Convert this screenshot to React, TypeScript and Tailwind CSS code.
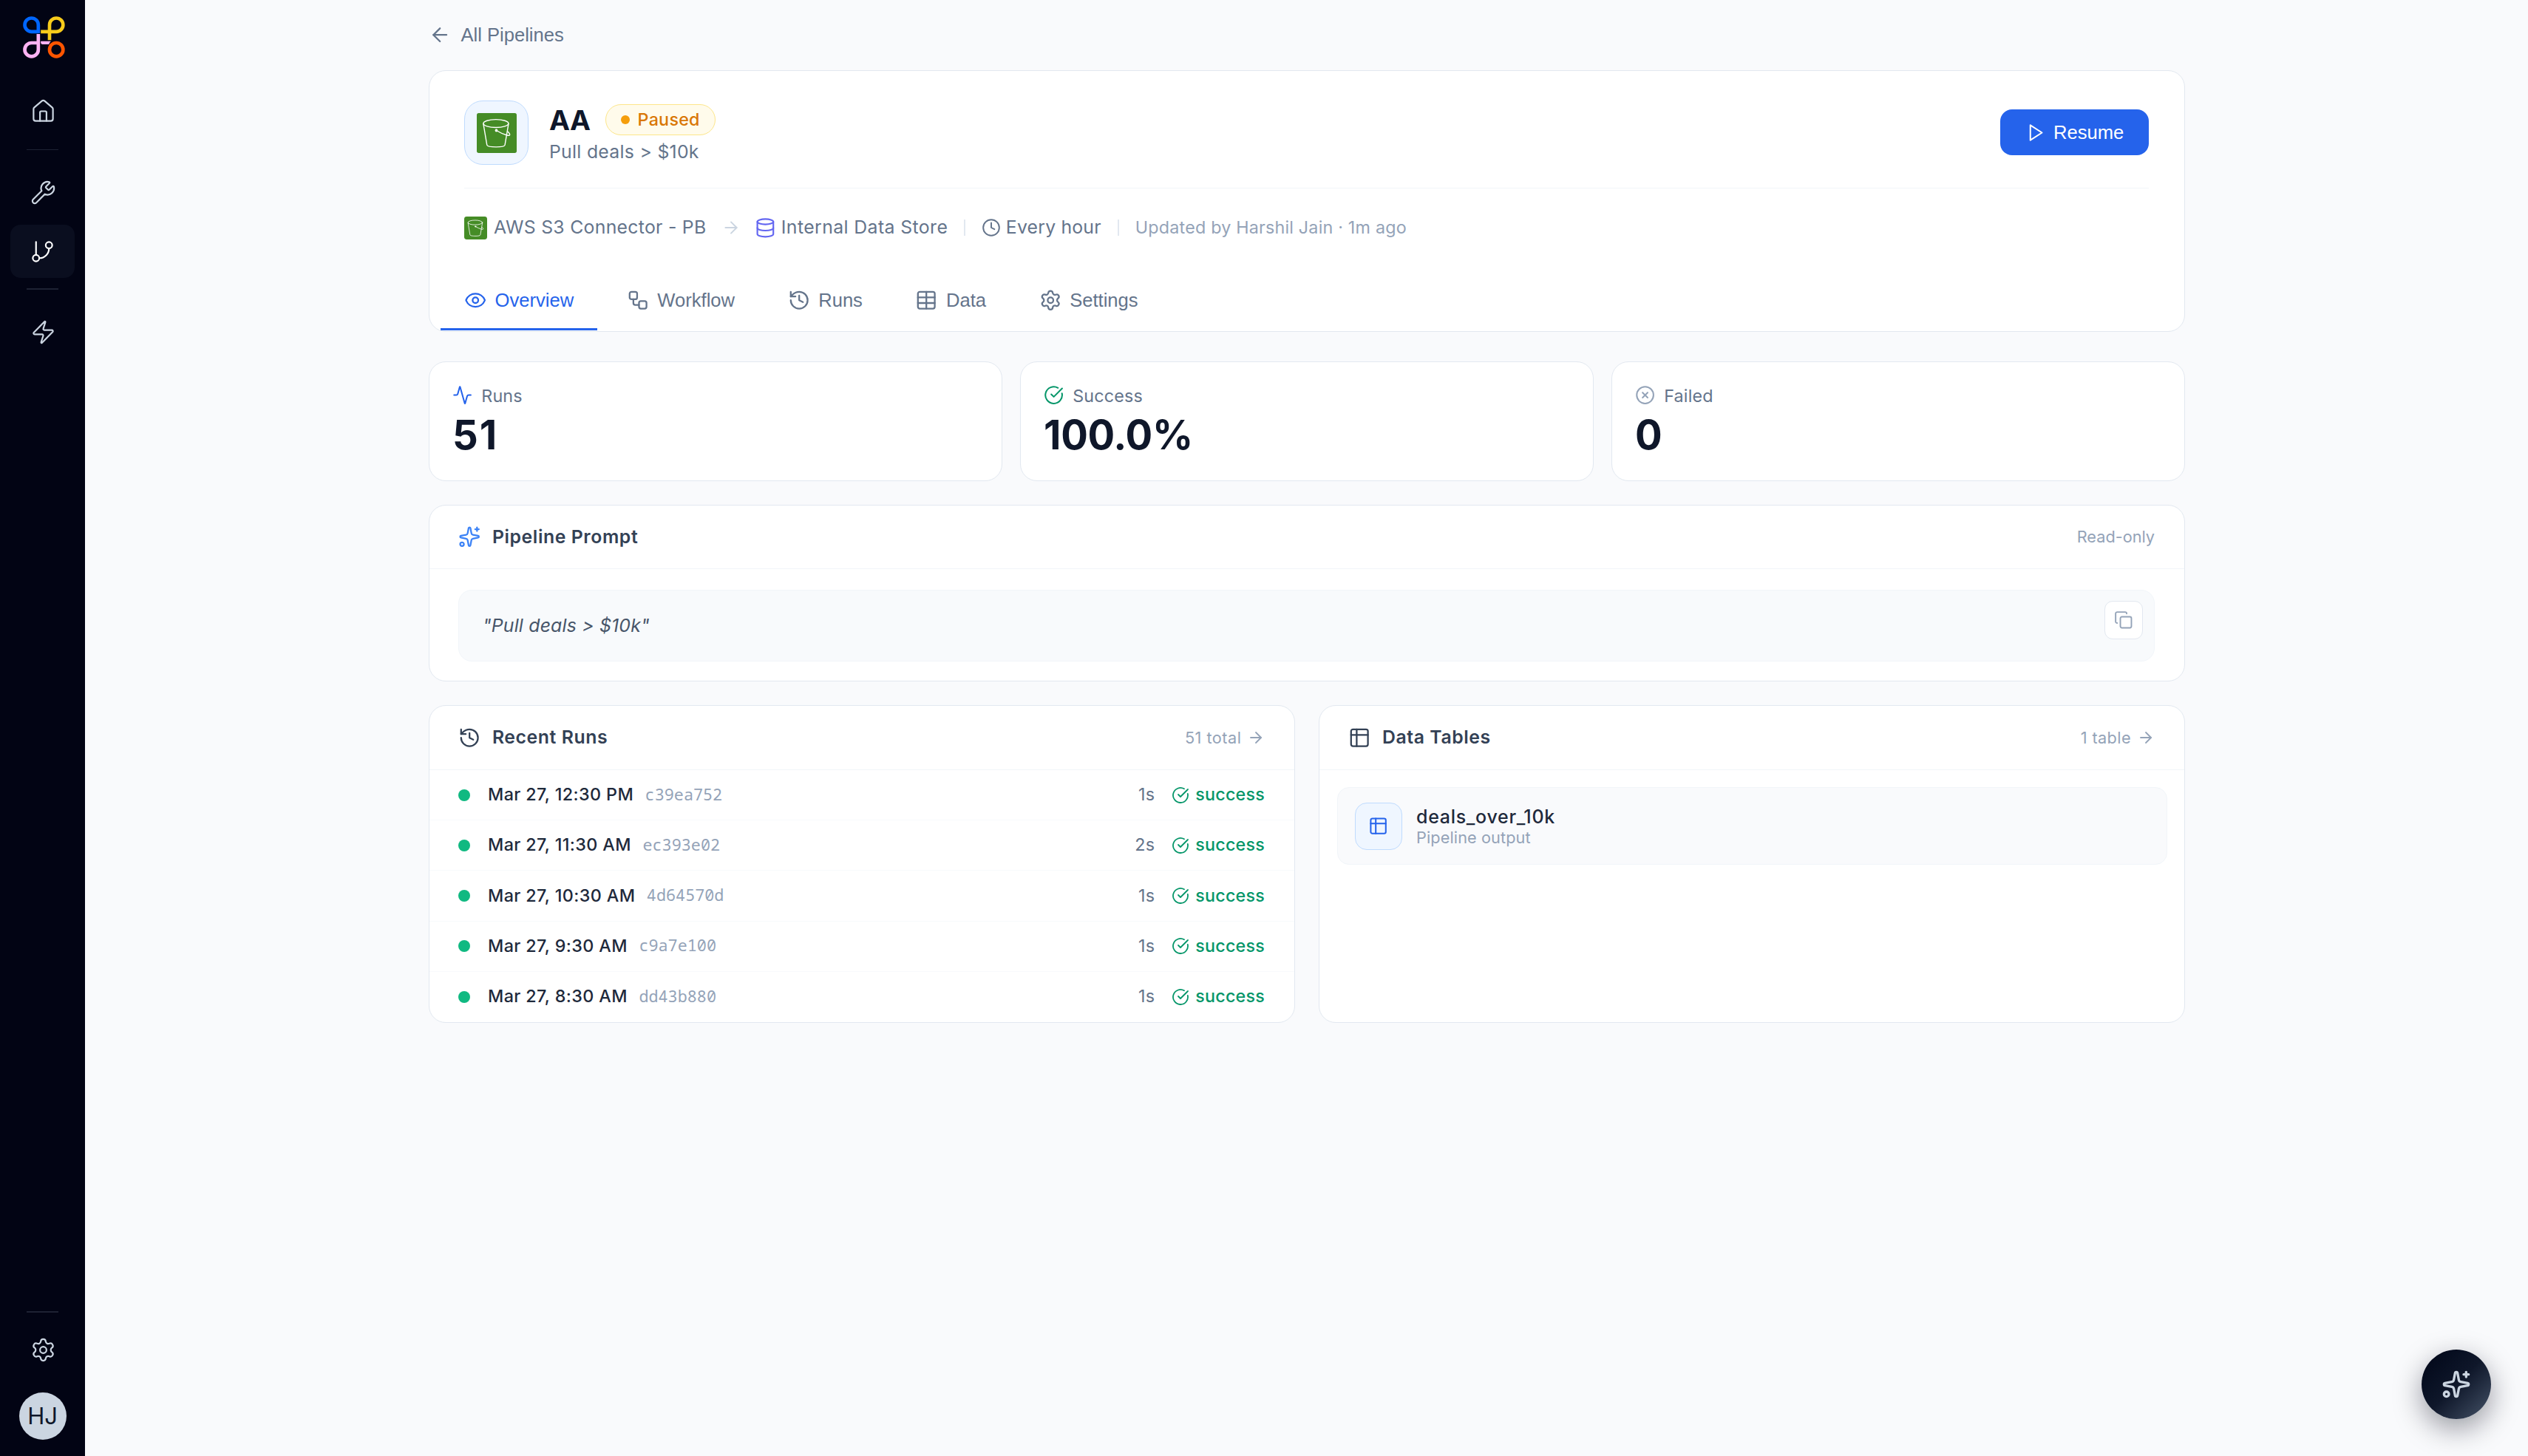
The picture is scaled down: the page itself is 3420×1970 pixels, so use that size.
import type { ReactNode } from 'react';
import {
  Activity,
  ArrowLeft,
  ArrowRight,
  CircleCheckBig,
  CircleX,
  Clock,
  Copy,
  Database,
  Eye,
  GitBranch,
  History,
  House,
  Settings,
  Sparkles,
  Table,
  Workflow,
  Wrench,
  Zap,
} from 'lucide-react';

function TableIcon({ size, strokeWidth = 2 }: { size: number; strokeWidth?: number }) {
  return (
    <svg width={size} height={size} viewBox="0 0 24 24" fill="none" stroke="currentColor" strokeWidth={strokeWidth} strokeLinecap="round" strokeLinejoin="round" className="shrink-0">
      <rect x="3" y="3" width="18" height="18" rx="2" />
      <path d="M3 9h18M9 3v18" />
    </svg>
  );
}

function Logo() {
  return (
    <svg width="57" height="57" viewBox="32.5 36 171 171" fill="none" strokeWidth="14">
      <path d="M95 105V71A27.5 27.5 0 1 0 67.5 98.5H95" stroke="#0066ff" />
      <path d="M140.500 133V71a27.500 27.500 0 1 1 27.500 27.500H105" stroke="#f8cc1b" />
      <path d="M95 108v63.500A27.500 27.500 0 1 1 67.500 144H88" stroke="#ffb3f3" />
      <path d="M105 137h41q-6 6-8 13h-28q-3-1-5-5z" fill="#ffb3f3" />
      <circle cx="168" cy="171.500" r="27.500" stroke="#ff5500" />
    </svg>
  );
}

function Bucket({ size }: { size: number }) {
  return (
    <svg width={size} height={size} viewBox="0 0 100 100" fill="none" stroke="#fff" strokeWidth="2.600" strokeLinecap="round" strokeLinejoin="round" className="shrink-0">
      <rect width="100" height="100" rx={size > 40 ? 5 : 11} fill="#458c26" stroke="none" />
      <ellipse cx="48" cy="26" rx="31.500" ry="10" />
      <path d="M16.500 27l9 53c1 4 12 5 23 5s21-1 22-5l9-53" />
      <circle cx="49" cy="43.500" r="2.200" fill="#fff" />
      <path d="M49 43.500c8 5 17 9 27 12 6 2 8-1 6-4l-4-5" />
    </svg>
  );
}

function RailIcon({ children }: { children: ReactNode }) {
  return <div className="flex h-[72px] w-[87px] items-center justify-center rounded-[14px] text-[#cbd5e1]">{children}</div>;
}

function Sidebar() {
  return (
    <aside className="flex w-[115px] shrink-0 flex-col items-center bg-[#020414]">
      <div className="mt-[22px] ml-[4px]">
        <Logo />
      </div>
      <div className="mt-[35px] ml-px">
        <RailIcon><House size={35} strokeWidth={1.5} /></RailIcon>
      </div>
      <div className="mt-[16px] h-px w-[43px] bg-[#1e2233]" />
      <div className="mt-[21px] ml-px">
        <RailIcon><Wrench size={35} strokeWidth={1.5} /></RailIcon>
      </div>
      <div className="mt-[8px] flex h-[72px] w-[87px] items-center justify-center rounded-[14px] bg-[#0a0e1f] text-white">
        <GitBranch size={35} strokeWidth={1.5} />
      </div>
      <div className="mt-[14px] h-[2px] w-[43px] bg-[#1e2233]" />
      <div className="mt-[21px] ml-px">
        <RailIcon><Zap size={35} strokeWidth={1.5} /></RailIcon>
      </div>
      <div className="mt-auto h-[2px] w-[43px] bg-[#1e2233]" />
      <div className="mt-[14px] ml-px">
        <RailIcon><Settings size={35} strokeWidth={1.5} /></RailIcon>
      </div>
      <div className="mt-[22px] mb-[22px] flex size-[64px] items-center justify-center rounded-full bg-[#cbd5e1] text-[31px] text-[#0f172a]">HJ</div>
    </aside>
  );
}

function Card({ className, children }: { className: string; children: ReactNode }) {
  return <section className={`overflow-hidden rounded-[23px] border border-[#e2e8f0] bg-white ${className}`}>{children}</section>;
}

const TABS = [
  { label: 'Overview', Icon: Eye, active: true },
  { label: 'Workflow', Icon: Workflow, active: false },
  { label: 'Runs', Icon: History, active: false },
  { label: 'Data', Icon: Table, active: false },
  { label: 'Settings', Icon: Settings, active: false },
];

function PipelineHeader() {
  return (
    <Card className="mt-[14px] h-[354px]">
      <div className="mr-[48px] ml-[47px] flex h-[159px] justify-between border-b border-[#f1f5f9] pt-[40px]">
        <div className="flex">
          <div className="flex size-[87px] items-center justify-center rounded-[25px] border border-[#bfdbfe] bg-[#eff6ff]">
            <Bucket size={54} />
          </div>
          <div className="ml-[28px]">
            <div className="mt-[5px] flex h-[42px] items-center">
              <h1 className="pt-[2px] text-[37.5px] font-bold tracking-[-0.5px] text-[#0f172a]">AA</h1>
              <div className="ml-[20px] flex h-[42px] items-center rounded-full border border-[#fde68a] bg-[#fffbeb] pr-[20px] pl-[20px]">
                <span className="size-[12px] rounded-full bg-[#f59e0b]" />
                <span className="ml-[11px] pt-px text-[23.3px] font-medium tracking-[0.25px] text-[#d97706]">Paused</span>
              </div>
            </div>
            <p className="mt-[6px] text-[24.8px] leading-[32px] tracking-[0.28px] text-[#64748b]">Pull deals &gt; $10k</p>
          </div>
        </div>
        <button className="mt-[12px] flex h-[62px] w-[201px] items-center rounded-[16px] bg-[#2563eb] pl-[34px] font-['Liberation_Sans'] text-[25.6px] text-white">
          <svg width="27" height="27" viewBox="0 0 24 24" fill="none" stroke="currentColor" strokeWidth="1.800" strokeLinecap="round" strokeLinejoin="round">
            <path d="M6 3l14 9-14 9z" />
          </svg>
          <span className="ml-[11px]">Resume</span>
        </button>
      </div>
      <div className="mx-[47px] flex h-[105px] items-center pt-px text-[24.8px] text-[#64748b]">
        <Bucket size={31} />
        <span className="ml-[9px] w-[289px] tracking-[0.28px] whitespace-nowrap">AWS S3 Connector - PB</span>
        <ArrowRight size={26} strokeWidth={1.8} className="ml-[19px] text-[#cbd5e1]" />
        <Database size={28.8} strokeWidth={1.8} className="ml-[19px] text-[#6366f1]" />
        <span className="ml-[7px] w-[225px] tracking-[0.4px] whitespace-nowrap">Internal Data Store</span>
        <span className="ml-[22px] h-[22px] w-[2px] bg-[#e2e8f0]" />
        <Clock size={26} strokeWidth={1.8} className="ml-[22px]" />
        <span className="ml-[7px] w-[129px] tracking-[0.2px] whitespace-nowrap">Every hour</span>
        <span className="ml-[22px] h-[22px] w-[2px] bg-[#e2e8f0]" />
        <span className="ml-[22px] pt-px text-[23.3px] tracking-[0.2px] whitespace-nowrap text-[#94a3b8]">Updated by Harshil Jain · 1m ago</span>
      </div>
      <nav className="flex h-[87px] gap-[7.5px] pl-[15px] font-['Liberation_Sans'] text-[25.6px]">
        {TABS.map(({ label, Icon, active }) => (
          <div
            key={label}
            className={
              active
                ? 'flex items-center gap-[11.2px] border-b-3 border-[#2563eb] px-[32px] pt-[8px] text-[#2563eb]'
                : 'flex items-center gap-[11.2px] border-b-3 border-transparent px-[32px] pt-[8px] text-[#64748b]'
            }
          >
            <Icon size={30.4} strokeWidth={1.8} />
            <span>{label}</span>
          </div>
        ))}
      </nav>
    </Card>
  );
}

const STATS = [
  { label: 'Runs', value: '51', Icon: Activity, color: 'text-[#2563eb]', tracking: 'tracking-[2px]' },
  { label: 'Success', value: '100.0%', Icon: CircleCheckBig, color: 'text-[#059669]', tracking: 'tracking-[-0.3px]' },
  { label: 'Failed', value: '0', Icon: CircleX, color: 'text-[#94a3b8]', tracking: 'tracking-normal' },
];

function Stats() {
  return (
    <div className="mt-[40px] grid grid-cols-3 gap-[24px]">
      {STATS.map(({ label, value, Icon, color, tracking }) => (
        <Card key={label} className="h-[162px] pl-[31px]">
          <div className="mt-[29px] flex h-[32px] items-center">
            <Icon size={27.2} strokeWidth={1.8} className={color} />
            <span className="ml-[12px] pt-[2px] text-[23.3px] tracking-[0.2px] text-[#64748b]">{label}</span>
          </div>
          <div className={`mt-[4px] text-[54.4px] leading-[66px] font-bold text-[#0f172a] ${tracking}`}>{value}</div>
        </Card>
      ))}
    </div>
  );
}

function PanelHead({ icon, title, right, className }: { icon: ReactNode; title: string; right: ReactNode; className: string }) {
  return (
    <div className={`flex items-center border-b border-[#f1f5f9] pr-[40px] pl-[39px] ${className}`}>
      {icon}
      <h2 className="ml-[15.5px] text-[24.8px] font-semibold tracking-[0.58px] text-[#334155]">{title}</h2>
      <div className="ml-auto flex items-center text-[21.7px] text-[#94a3b8]">{right}</div>
    </div>
  );
}

function Prompt() {
  return (
    <Card className="mt-[32px] h-[239px]">
      <PanelHead
        className="h-[86px]"
        icon={<Sparkles size={30.4} strokeWidth={1.8} className="text-[#3b82f6]" />}
        title="Pipeline Prompt"
        right={<span>Read-only</span>}
      />
      <div className="relative mt-[28px] mr-[40px] ml-[39px] flex h-[97px] items-center rounded-[18px] border border-[#f1f5f9] bg-[#f8fafc] pl-[32px]">
        <p className="text-[24.8px] tracking-[0.2px] text-[#475569] italic">"Pull deals &gt; $10k"</p>
        <div className="absolute top-[14px] right-[15px] flex size-[52px] items-center justify-center rounded-[11px] border border-[#e2e8f0] bg-white text-[#94a3b8]">
          <Copy size={25.6} strokeWidth={1.8} />
        </div>
      </div>
    </Card>
  );
}

const RUNS = [
  ['Mar 27, 12:30 PM', 'c39ea752', '1s'],
  ['Mar 27, 11:30 AM', 'ec393e02', '2s'],
  ['Mar 27, 10:30 AM', '4d64570d', '1s'],
  ['Mar 27, 9:30 AM', 'c9a7e100', '1s'],
  ['Mar 27, 8:30 AM', 'dd43b880', '1s'],
];

function RecentRuns() {
  return (
    <Card className="flex h-[430px] flex-col">
      <PanelHead
        className="h-[87px] shrink-0"
        icon={<History size={30.4} strokeWidth={1.8} className="text-[#334155]" />}
        title="Recent Runs"
        right={
          <>
            <span className="tracking-[0.5px]">51 total</span>
            <ArrowRight size={24} strokeWidth={1.8} className="ml-[7.5px]" />
          </>
        }
      />
      <div className="grid flex-1 grid-rows-5 divide-y divide-[#f8fafc]">
        {RUNS.map(([date, id, took]) => (
          <div key={id} className="flex items-center pr-[40px] pl-[39px] text-[23.3px]">
            <span className="size-[16px] rounded-full bg-[#10b981]" />
            <span className="ml-[24px] font-medium tracking-[0.4px] text-[#1e293b]">{date}</span>
            <span className="ml-[15.5px] pb-[2px] font-['Noto_Sans_Mono','DejaVu_Sans_Mono',monospace] text-[21.8px] leading-[26px] text-[#94a3b8]">{id}</span>
            <span className="ml-auto tracking-[0.3px] text-[#64748b]">{took}</span>
            <CircleCheckBig size={24} strokeWidth={1.8} className="ml-[23px] text-[#059669]" />
            <span className="ml-[8px] font-medium tracking-[0.2px] text-[#059669]">success</span>
          </div>
        ))}
      </div>
    </Card>
  );
}

function DataTables() {
  return (
    <Card className="h-[430px]">
      <PanelHead
        className="h-[87px]"
        icon={<span className="text-[#334155]"><TableIcon size={30.4} strokeWidth={1.8} /></span>}
        title="Data Tables"
        right={
          <>
            <span className="tracking-[0.4px]">1 table</span>
            <ArrowRight size={24} strokeWidth={1.8} className="ml-[8px]" />
          </>
        }
      />
      <div className="mt-[23px] mr-[23px] ml-[24px] flex h-[105px] items-center rounded-[16px] border border-[#f1f5f9] bg-[#f9fafc] pl-[23px]">
        <div className="flex size-[64px] items-center justify-center rounded-[16px] border border-[#bfdbfe] bg-[#eff6ff] text-[#2563eb]">
          <TableIcon size={27.2} strokeWidth={1.8} />
        </div>
        <div className="ml-[19px] pt-[2px]">
          <div className="text-[25px] leading-[28px] font-medium tracking-[0.7px] text-[#1e293b]">deals_over_10k</div>
          <div className="text-[21.7px] leading-[28px] tracking-[0.1px] text-[#94a3b8]">Pipeline output</div>
        </div>
      </div>
    </Card>
  );
}

export default function App() {
  return (
    <div className="relative flex h-[1970px] w-[3420px] overflow-hidden bg-[#f9fafc] font-['Inter',sans-serif]">
      <Sidebar />
      <main className="flex-1 pl-px">
        <div className="mx-auto w-[2376px]">
          <div className="flex h-[81px] items-center gap-[13px] pt-[14px] font-['Liberation_Sans'] text-[25.6px] text-[#64748b]">
            <ArrowLeft size={30.4} strokeWidth={1.8} />
            <span>All Pipelines</span>
          </div>
          <PipelineHeader />
          <Stats />
          <Prompt />
          <div className="mt-[32px] grid grid-cols-2 gap-[32px]">
            <RecentRuns />
            <DataTables />
          </div>
        </div>
      </main>
      <div className="absolute right-[50px] bottom-[50px] flex size-[94px] items-center justify-center rounded-full bg-linear-135 from-[#020617] from-0% via-[#0f172a] via-50% to-[#475569] to-100% text-[#cbd5e1] shadow-[0_13px_38px_rgba(2,6,23,0.4)]">
        <Sparkles size={40} strokeWidth={2} />
      </div>
    </div>
  );
}
